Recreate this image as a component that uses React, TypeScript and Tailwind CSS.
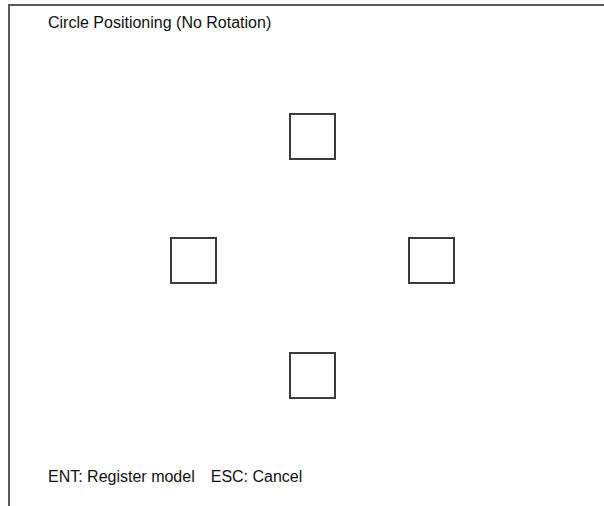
export default function App() {
  const boxes = [
    { key: "top", cls: "left-[279px] top-[107px]" },
    { key: "left", cls: "left-[160px] top-[231px]" },
    { key: "right", cls: "left-[398px] top-[231px]" },
    { key: "bottom", cls: "left-[279px] top-[346px]" },
  ];

  return (
    <div className="w-[604px] h-[506px] bg-white overflow-hidden font-['Liberation_Sans',Arial,sans-serif] text-[#111]">
      {/* Window frame */}
      <div className="relative ml-2 mt-1 h-[502px] flex flex-col border-t-2 border-l-2 border-[#5a5a5a]">
        <div className="pl-[38px] pt-[8px] text-[16px] leading-[18px]">
          Circle Positioning (No Rotation)
        </div>

        {/* Position markers */}
        {boxes.map((b) => (
          <div
            key={b.key}
            className={`absolute ${b.cls} w-[47px] h-[47px] border-2 border-[#3a3a3a]`}
          />
        ))}

        <div className="mt-auto pl-[38px] pb-[20px] text-[16px] leading-[18px] flex gap-4">
          <span>ENT: Register model</span>
          <span>ESC: Cancel</span>
        </div>
      </div>
    </div>
  );
}
